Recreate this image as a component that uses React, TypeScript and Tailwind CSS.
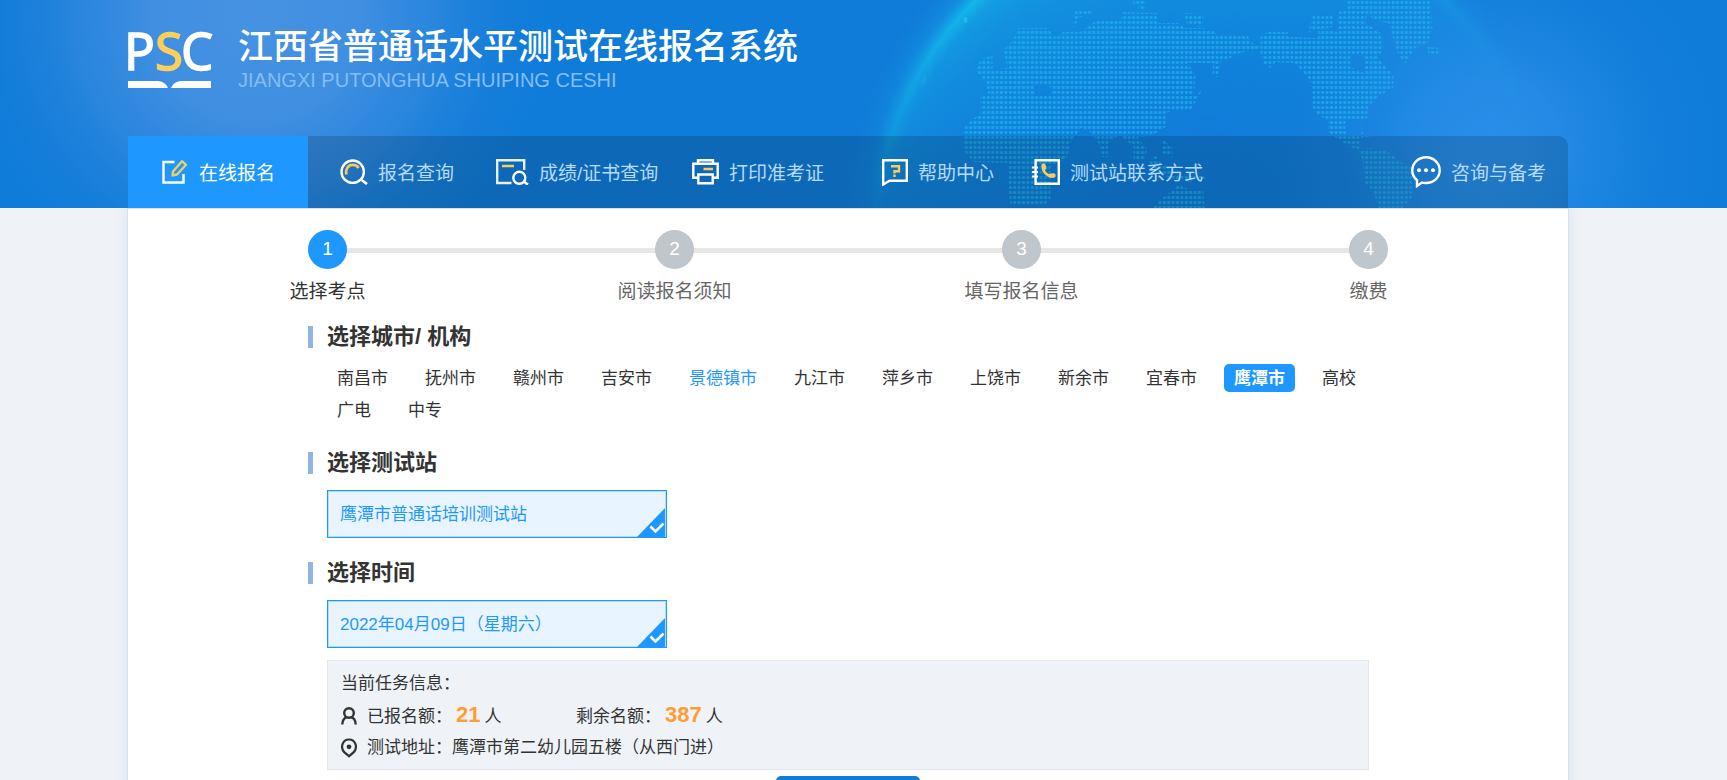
import React, { useState } from 'react';

const EditIcon = () => (
  <svg className="shrink-0" width="27" height="26" viewBox="0 0 27 26" fill="none">
    <path d="M12.5 3H1.5V23.5H21.5V15" stroke="#fff" strokeWidth="2.4" />
    <path d="M11 12.5L20 2.2L24 5.8L15 15.5L10.6 16.4Z" stroke="#f5cd5c" strokeWidth="2.4" strokeLinejoin="round" />
  </svg>
);

const SearchIcon = () => (
  <svg className="shrink-0" width="28" height="26" viewBox="0 0 28 26" fill="none">
    <circle cx="12.7" cy="12.7" r="11.2" stroke="#fff" strokeWidth="2.4" />
    <path d="M21 20.5L27 25" stroke="#fff" strokeWidth="2.6" />
    <path d="M6.4 15.5C5 10 8.5 5.9 12.5 5.9C15.5 5.9 17.5 7 18.6 9" stroke="#f5cd5c" strokeWidth="2.6" />
  </svg>
);

const ScoreIcon = () => (
  <svg className="shrink-0" width="33" height="26" viewBox="0 0 33 26" fill="none">
    <path d="M28.2 11V1.2H1.2V24H15.5" stroke="#e8eef5" strokeWidth="2.4" />
    <path d="M6 7H18" stroke="#f5cd5c" strokeWidth="2.6" />
    <circle cx="23.3" cy="18.8" r="6" stroke="#fff" strokeWidth="2.4" />
    <path d="M27.5 22.5L32 25.5" stroke="#fff" strokeWidth="2.6" />
  </svg>
);

const PrintIcon = () => (
  <svg className="shrink-0" width="27" height="26" viewBox="0 0 27 26" fill="none" stroke="#fff" strokeWidth="2.4">
    <path d="M6 5V1.3H21V5" />
    <path d="M5.5 18.8H1.3V4.8H25.7V18.8H21" />
    <path d="M6.3 15.5H20.7V24.2H6.3Z" />
    <path d="M11.5 10H21" stroke="#f5cd5c" strokeWidth="2.6" />
  </svg>
);

const HelpIcon = () => (
  <svg className="shrink-0" width="26" height="27" viewBox="0 0 26 27" fill="none">
    <path d="M1.2 1.2H24.8V21.8H7.5L1.2 25.5Z" stroke="#fff" strokeWidth="2.4" />
    <path d="M9 7.2H17V12.2H12.5V14.5" stroke="#f5cd5c" strokeWidth="2.4" />
    <path d="M11.3 15.5H13.7V18H11.3Z" fill="#f5cd5c" />
  </svg>
);

const ContactIcon = () => (
  <svg className="shrink-0" width="28" height="26" viewBox="0 0 28 26" fill="none">
    <path d="M3.6 1.2H26.8V24.8H3.6Z" stroke="#fff" strokeWidth="2.4" />
    <path d="M0 8.5H6M0 13H6M0 17.5H6" stroke="#fff" strokeWidth="2.2" />
    <path d="M11.5 6.8C9.5 11.5 15 18 21.5 17.2" stroke="#f5cd5c" strokeWidth="2.6" />
    <path d="M11.5 6.5L12.2 9M18.8 16.6L21.5 16.5" stroke="#f5cd5c" strokeWidth="4.4" strokeLinecap="round" />
  </svg>
);

const ChatIcon = () => (
  <svg className="shrink-0" width="30" height="32" viewBox="0 0 30 32" fill="none">
    <path
      d="M6 24.2C3 21.8 1.3 18.5 1.3 14.5C1.3 7.2 7.4 1.3 15 1.3C22.6 1.3 28.7 7.2 28.7 14.3C28.7 21.5 22.6 27 15 27C13.5 27 12.3 27 11 26.6L6 30Z"
      stroke="#fff"
      strokeWidth="2.4"
    />
    <circle cx="8" cy="14.3" r="2" fill="#fff" />
    <circle cx="15" cy="14.3" r="2" fill="#fff" />
    <circle cx="22" cy="14.3" r="2" fill="#fff" />
  </svg>
);

const UserIcon = () => (
  <svg width="16" height="18" viewBox="0 0 16 18" fill="none" stroke="#333" strokeWidth="2.4">
    <circle cx="8" cy="6" r="4.8" />
    <path d="M1.3 17.5C1.5 13.5 3.5 10.8 6 10.2M14.7 17.5C14.5 13.5 12.5 10.8 10 10.2" />
  </svg>
);

const PinIcon = () => (
  <svg width="16" height="20" viewBox="0 0 16 20" fill="none">
    <path d="M8 18.2L3.2 14.2C-1 9.5 1.4 1.5 8 1.5S17 9.5 12.8 14.2Z" stroke="#333" strokeWidth="2.2" />
    <circle cx="8" cy="8.8" r="2.4" fill="#333" />
  </svg>
);

// 头部背景：光晕、地球弧线和点阵地图
const HeaderBackground = () => (
  <svg
    className="absolute top-0 left-1/2 -translate-x-1/2"
    width="1727"
    height="208"
    viewBox="0 0 1727 208"
    fill="none"
    aria-hidden="true"
  >
    <defs>
      <radialGradient id="glowLeft" gradientUnits="userSpaceOnUse" cx="255" cy="15" r="300">
        <stop offset="0" stopColor="#4691e2" />
        <stop offset="0.35" stopColor="#4591e2" stopOpacity="0.9" />
        <stop offset="0.6" stopColor="#3a8ce0" stopOpacity="0.6" />
        <stop offset="0.82" stopColor="#2484dc" stopOpacity="0.25" />
        <stop offset="1" stopColor="#107cd9" stopOpacity="0" />
      </radialGradient>
      <radialGradient id="glowRight" gradientUnits="userSpaceOnUse" cx="1490" cy="150" r="240">
        <stop offset="0" stopColor="#2d90eb" stopOpacity="0.9" />
        <stop offset="0.3" stopColor="#2b90ea" stopOpacity="0.7" />
        <stop offset="0.6" stopColor="#2089e4" stopOpacity="0.4" />
        <stop offset="0.85" stopColor="#1780dc" stopOpacity="0.12" />
        <stop offset="1" stopColor="#107cd9" stopOpacity="0" />
      </radialGradient>
      <radialGradient id="globe" gradientUnits="userSpaceOnUse" cx="1210" cy="241" r="380">
        <stop offset="0" stopColor="#1280dc" stopOpacity="0" />
        <stop offset="0.5" stopColor="#1290e0" stopOpacity="0.5" />
        <stop offset="0.78" stopColor="#149ae2" stopOpacity="0.8" />
        <stop offset="0.85" stopColor="#14a4e4" stopOpacity="0.85" />
        <stop offset="0.885" stopColor="#14bcec" stopOpacity="0.95" />
        <stop offset="0.92" stopColor="#1296e2" stopOpacity="0.6" />
        <stop offset="1" stopColor="#107cd9" stopOpacity="0" />
      </radialGradient>
      <linearGradient id="fade" x1="840" y1="0" x2="1560" y2="0" gradientUnits="userSpaceOnUse">
        <stop offset="0" stopColor="#fff" />
        <stop offset="0.6" stopColor="#fff" stopOpacity="0.9" />
        <stop offset="1" stopColor="#fff" stopOpacity="0.1" />
      </linearGradient>
      <linearGradient id="fadeDown" x1="0" y1="0" x2="0" y2="208" gradientUnits="userSpaceOnUse">
        <stop offset="0" stopColor="#000" stopOpacity="0" />
        <stop offset="1" stopColor="#000" stopOpacity="0.85" />
      </linearGradient>
      <mask id="globeMask">
        <rect x="820" width="780" height="208" fill="url(#fade)" />
        <rect x="820" width="780" height="208" fill="url(#fadeDown)" />
      </mask>
      <pattern id="dots" width="4.4" height="5" patternUnits="userSpaceOnUse">
        <rect x="0.7" y="1" width="3" height="3" rx="1" fill="#1cb2ee" />
      </pattern>
    </defs>
    <rect width="700" height="208" fill="url(#glowLeft)" />
    <rect x="820" width="780" height="208" fill="url(#globe)" mask="url(#globeMask)" />
    <rect x="1200" width="527" height="208" fill="url(#glowRight)" />
    <g fill="url(#dots)" fillRule="evenodd" opacity="0.72">
      <path d="M1017 28L1048 28L1053 37L1063 32L1080 32L1095 21L1120 20L1122 12L1157 13L1158 23L1178 23L1185 28L1203 28L1215 32L1217 36L1247 35L1250 42L1260 47L1240 53L1225 60L1217 63L1187 63L1195 75L1193 97L1202 90L1190 110L1173 110L1165 113L1165 127L1150 136L1137 137L1147 150L1143 160L1133 160L1133 147L1120 135L1108 140L1107 157L1102 157L1098 143L1088 130L1080 128L1070 143L1067 157L1050 167L1050 200L1043 205L1010 205L1007 180L1007 163L973 162L963 150L963 127L980 113L980 97L988 95L985 82L975 70L980 60L992 55L992 70L1007 68L1003 50L1013 40ZM1033 87L1042 83L1052 88L1050 95L1035 95Z" />
      <path d="M1072 27L1073 13L1078 9L1093 12L1083 16L1077 18L1075 27ZM1133 0H1145V10H1138V5H1133ZM1183 13L1203 14L1202 27L1187 25ZM1213 60L1220 63L1217 77L1212 75ZM1161 138L1172 147L1172 158L1162 153ZM1155 155L1160 163L1180 175L1195 172L1206 178L1190 182L1165 177L1148 163Z" />
      <path d="M1153 208L1160 200L1178 185L1190 190L1203 191L1204 208Z" />
      <path d="M1260 37L1267 32L1287 32L1288 37L1317 38L1318 28L1337 32L1337 12L1347 10L1345 0L1430 0L1432 30L1427 43L1415 48L1405 63L1398 55L1393 40L1388 23L1373 20L1367 13L1365 23L1380 33L1383 50L1377 57L1385 67L1393 75L1393 87L1373 100L1367 110L1367 118L1361 120L1362 133L1375 136L1360 138L1360 150L1368 148L1385 150L1400 162L1413 168L1412 197L1402 208L1378 208L1373 192L1365 183L1362 160L1358 150L1350 147L1333 136L1328 132L1328 120L1317 115L1312 107L1312 85L1303 72L1293 63L1275 62L1270 68L1263 63L1260 53ZM1350 57L1360 53L1365 60L1363 73L1350 67ZM1345 120H1361V133L1350 136L1345 132Z" />
      <path d="M1427 47L1440 48L1438 55L1428 53ZM1312 15L1332 15L1332 27L1308 32ZM1246 45H1260V49H1246Z" />
    </g>
    <ellipse cx="965" cy="20" rx="2" ry="3" fill="#3fd3f0" opacity="0.4" />
    <ellipse cx="924" cy="80" rx="3" ry="5" fill="#2bb8ee" opacity="0.2" />
  </svg>
);

const Logo = () => (
  <svg className="-mr-1 -ml-1" width="92" height="80" viewBox="-4 -20 92 80" fill="none" aria-label="PSC">
    <g fontFamily="'Noto Sans', 'Open Sans', sans-serif" fontSize="51" strokeWidth="1.4">
      <text x="-4" y="40" fill="#fff" stroke="#fff">P</text>
      <text x="27" y="40" fill="#fccf5a" stroke="#fccf5a">S</text>
      <text x="53" y="40" fill="#fff" stroke="#fff">C</text>
    </g>
    <path d="M0 51H30Q38 52 40 58H0Z" fill="#fff" />
    <path d="M83 51H53Q45 52 43 58H83Z" fill="#fff" />
  </svg>
);

const navItems = [
  { label: '在线报名', icon: <EditIcon />, className: 'w-[180px] pl-[34px]' },
  { label: '报名查询', icon: <SearchIcon />, className: 'w-[168px] pl-8' },
  { label: '成绩/证书查询', icon: <ScoreIcon />, className: 'w-[204px] pl-5' },
  { label: '打印准考证', icon: <PrintIcon />, className: 'w-[168px] pl-3' },
  { label: '帮助中心', icon: <HelpIcon />, className: 'w-[150px] pl-[34px]' },
  { label: '测试站联系方式', icon: <ContactIcon />, className: 'w-[216px] pl-[34px]' },
  { label: '咨询与备考', icon: <ChatIcon />, className: 'ml-auto pr-[22px]' },
];

const steps = ['选择考点', '阅读报名须知', '填写报名信息', '缴费'];

const cities = [
  '南昌市', '抚州市', '赣州市', '吉安市', '景德镇市', '九江市', '萍乡市',
  '上饶市', '新余市', '宜春市', '鹰潭市', '高校', '广电', '中专',
];

const SectionTitle = ({ children }: { children: React.ReactNode }) => (
  <h2 className="flex h-[30px] items-center gap-3.5 text-[22px] leading-[30px] font-bold">
    <span className="h-[22px] w-[5px] bg-[#8fb5e4]" />
    {children}
  </h2>
);

const OptionCard = ({ name, label }: { name: string; label: string }) => (
  <label className="relative flex h-12 w-[340px] cursor-pointer items-center border border-[#1e98ff] bg-[#e8f4ff] px-3 pt-0.5 text-[17px] text-[#1e98ff] inset-ring inset-ring-[#b4dcff]">
    <input type="radio" name={name} defaultChecked className="sr-only" />
    {label}
    <svg className="absolute right-0 bottom-0" width="29" height="29" viewBox="0 0 29 29" fill="none">
      <path d="M28 0V29H0Z" fill="#1e98ff" />
      <path d="M13.5 18.5L18.5 23.5L26.5 15.5" stroke="#fff" strokeWidth="2.6" />
    </svg>
  </label>
);

const Quota = ({ count }: { count: number }) => (
  <strong className="mx-1 text-[22px] text-[#ff9c33]">{count}</strong>
);

const App = () => {
  const [activeNav, setActiveNav] = useState(0);
  const [activeCity, setActiveCity] = useState('鹰潭市');

  return (
    <div className="flex min-h-screen flex-col bg-[#eff3f8] font-['Liberation_Sans','Noto_Sans_CJK_SC',sans-serif] text-[#333]">
      <header className="relative overflow-hidden bg-[#107cd9] pr-[159px] pl-32">
        <HeaderBackground />

        <div className="relative flex h-[136px] items-start gap-[26px] pt-2.5">
          <Logo />
          <div className="pt-4 text-white">
            <h1 className="text-[35px] leading-[42px] font-medium">江西省普通话水平测试在线报名系统</h1>
            <p className="text-xl leading-6 text-[#83bdf6]">JIANGXI PUTONGHUA SHUIPING CESHI</p>
          </div>
        </div>

        {/* 主导航 */}
        <nav className="relative flex h-[72px] overflow-hidden rounded-tr-[10px] bg-black/15 text-[19px]">
          {navItems.map((item, index) => (
            <a
              key={item.label}
              href="#"
              onClick={() => setActiveNav(index)}
              className={`flex shrink-0 items-center gap-2.5 whitespace-nowrap ${item.className} ${
                index === activeNav ? 'bg-[#1e98ff] text-white' : 'text-[#b5dbfb]'
              }`}
            >
              {item.icon}
              <span className="pt-1">{item.label}</span>
            </a>
          ))}
        </nav>
      </header>

      <main className="mr-[159px] ml-32 grow border-t border-[#d9e1ea] bg-white px-[180px] pb-10 shadow-[0_0_14px_rgba(60,90,130,0.12)] outline outline-[#d9e1ea]">
        {/* 报名步骤 */}
        <div className="relative pt-[21px]">
          <div className="absolute inset-x-5 top-[39px] h-[5px] bg-[#e6e6e6]" />
          <ol className="relative flex justify-between text-[19px]">
            {steps.map((step, index) => (
              <li key={step} className="flex w-[39px] flex-col items-center gap-2">
                <span
                  className={`flex h-[39px] w-[39px] items-center justify-center rounded-full text-white ${
                    index === 0 ? 'bg-[#1e98ff]' : 'bg-[#bfc6cc]'
                  }`}
                >
                  {index + 1}
                </span>
                <span className={`leading-[30px] whitespace-nowrap ${index === 0 ? '' : 'text-[#666]'}`}>{step}</span>
              </li>
            ))}
          </ol>
        </div>

        <section className="mt-[15px]">
          <SectionTitle>选择城市/ 机构</SectionTitle>
          <div className="mt-3 ml-[19px] flex flex-wrap gap-x-[17px] gap-y-1">
            {cities.map((city) => (
              <button
                key={city}
                type="button"
                onClick={() => setActiveCity(city)}
                className={`h-7 rounded-[5px] px-2.5 pt-0.5 text-[17px] leading-[26px] ${
                  city === activeCity ? 'bg-[#1e98ff] font-bold text-white' : ''
                } ${city === '景德镇市' ? 'text-[#1e98ff]' : ''}`}
              >
                {city}
              </button>
            ))}
          </div>
        </section>

        <section className="mt-6">
          <SectionTitle>选择测试站</SectionTitle>
          <div className="mt-3 ml-[19px]">
            <OptionCard name="station" label="鹰潭市普通话培训测试站" />
          </div>
        </section>

        <section className="mt-5">
          <SectionTitle>选择时间</SectionTitle>
          <div className="mt-3 ml-[19px]">
            <OptionCard name="date" label="2022年04月09日（星期六）" />
          </div>
        </section>

        {/* 当前任务信息 */}
        <section className="mx-[19px] mt-3 border border-[#e0e7ef] bg-[#eff3f8] px-[13px] pt-[7px] pb-[5px] text-[17px] leading-8">
          <p>当前任务信息：</p>
          <div className="flex h-8 items-center gap-2.5">
            <UserIcon />
            <p className="w-[199px]">
              已报名额：
              <Quota count={21} />人
            </p>
            <p>
              剩余名额：
              <Quota count={387} />人
            </p>
          </div>
          <div className="flex h-8 items-center gap-2.5">
            <PinIcon />
            <p>测试地址：鹰潭市第二幼儿园五楼（从西门进）</p>
          </div>
        </section>

        <button type="button" className="mx-auto mt-1.5 block h-12 w-36 rounded-[5px] bg-[#107cd9] text-[19px] text-white">
          下一步
        </button>
      </main>
    </div>
  );
};

export default App;
